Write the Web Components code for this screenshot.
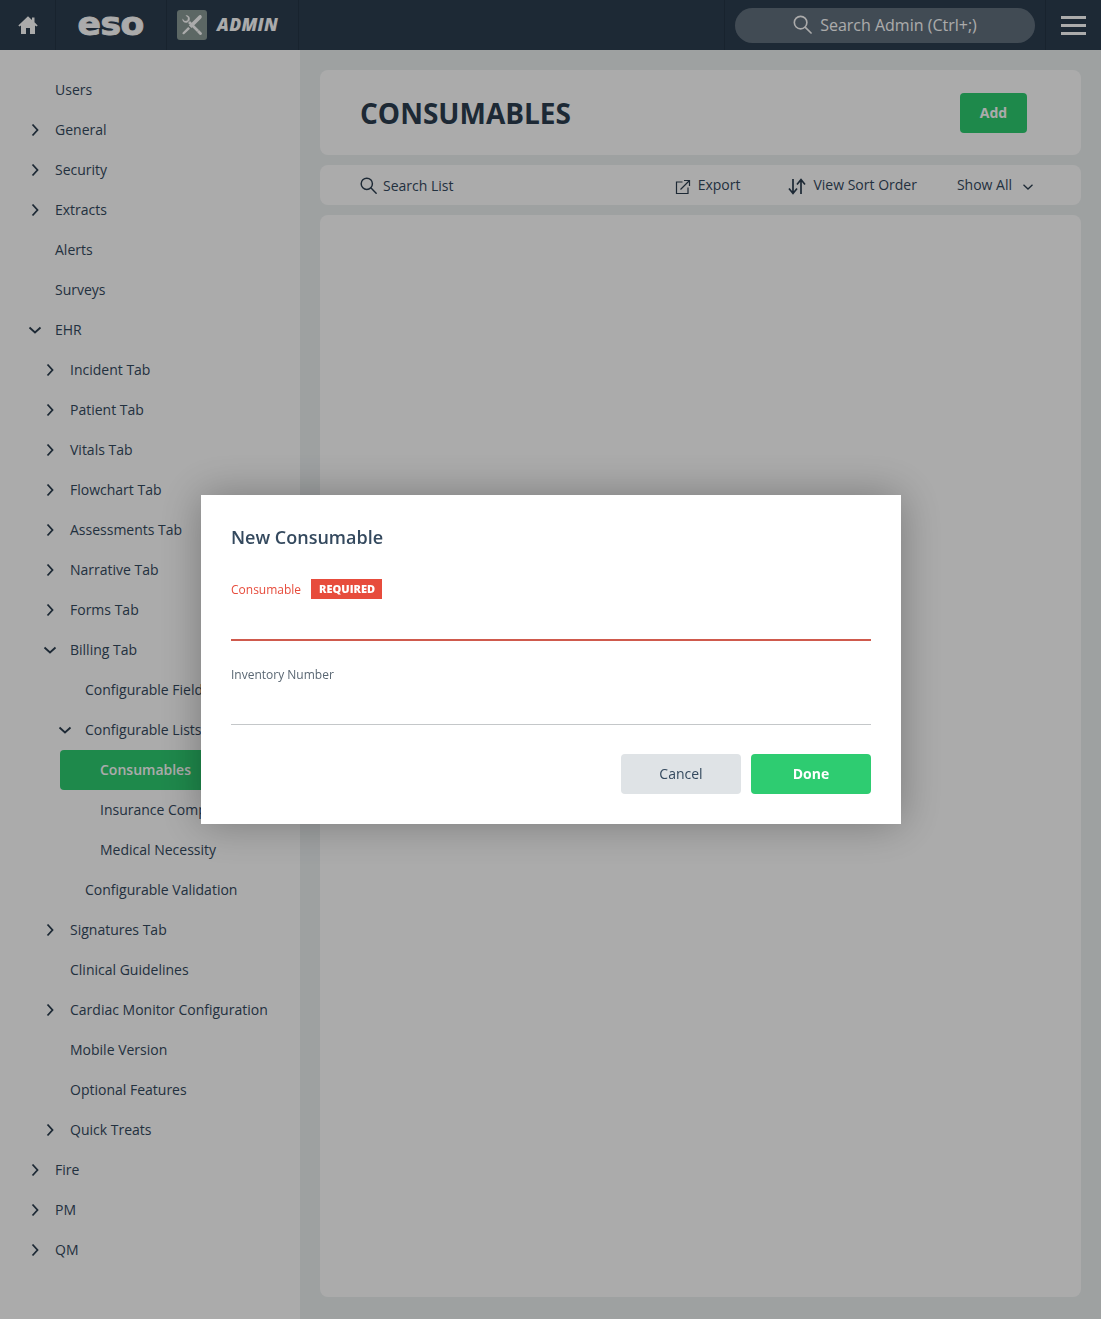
<!DOCTYPE html>
<html>
<head>
<meta charset="utf-8">
<title>Consumables</title>
<style>
    html, body { margin: 0; padding: 0; }
    body { font-family: "Open Sans", "Liberation Sans", sans-serif; color: #2c3e50; background: #ecf0f1; }
    .layout { display: flex; align-items: stretch; min-height: 1269px; }
</style>
</head>
<body>
<app-header></app-header>
<div class="layout">
    <side-nav>
        <nav-item>Users</nav-item>
        <nav-item arrow="right">General</nav-item>
        <nav-item arrow="right">Security</nav-item>
        <nav-item arrow="right">Extracts</nav-item>
        <nav-item>Alerts</nav-item>
        <nav-item>Surveys</nav-item>
        <nav-item arrow="down">EHR</nav-item>
        <nav-item level="1" arrow="right">Incident Tab</nav-item>
        <nav-item level="1" arrow="right">Patient Tab</nav-item>
        <nav-item level="1" arrow="right">Vitals Tab</nav-item>
        <nav-item level="1" arrow="right">Flowchart Tab</nav-item>
        <nav-item level="1" arrow="right">Assessments Tab</nav-item>
        <nav-item level="1" arrow="right">Narrative Tab</nav-item>
        <nav-item level="1" arrow="right">Forms Tab</nav-item>
        <nav-item level="1" arrow="down">Billing Tab</nav-item>
        <nav-item level="2">Configurable Fields</nav-item>
        <nav-item level="2" arrow="down">Configurable Lists</nav-item>
        <nav-item level="3" active>Consumables</nav-item>
        <nav-item level="3">Insurance Companies</nav-item>
        <nav-item level="3">Medical Necessity</nav-item>
        <nav-item level="2">Configurable Validation</nav-item>
        <nav-item level="1" arrow="right">Signatures Tab</nav-item>
        <nav-item level="1">Clinical Guidelines</nav-item>
        <nav-item level="1" arrow="right">Cardiac Monitor Configuration</nav-item>
        <nav-item level="1">Mobile Version</nav-item>
        <nav-item level="1">Optional Features</nav-item>
        <nav-item level="1" arrow="right">Quick Treats</nav-item>
        <nav-item arrow="right">Fire</nav-item>
        <nav-item arrow="right">PM</nav-item>
        <nav-item arrow="right">QM</nav-item>
    </side-nav>
    <main-panel heading="CONSUMABLES"></main-panel>
</div>
<modal-dialog heading="New Consumable">
    <form-field label="Consumable" required></form-field>
    <form-field label="Inventory Number"></form-field>
    <ui-button slot="actions" kind="plain">Cancel</ui-button>
    <ui-button slot="actions" kind="primary">Done</ui-button>
</modal-dialog>

<script>
// shared icon for search, used in header and toolbar
const searchIcon = (size, color) => `
    <svg width="${size}" height="${size}" viewBox="0 0 20 20" fill="none" stroke="${color}" stroke-width="1.7" stroke-linecap="round">
        <circle cx="8" cy="8" r="6.6"/><line x1="13" y1="13" x2="19" y2="19"/>
    </svg>`;

class AppHeader extends HTMLElement {
    connectedCallback() {
        this.attachShadow({ mode: "open" }).innerHTML = `
        <style>
            :host { display: flex; height: 50px; background: #2c3e50; color: #fff; align-items: stretch; }
            .cell { display: flex; align-items: center; border-right: 1px solid #253545; box-sizing: border-box; flex: none; }
            .home { width: 56px; justify-content: center; }
            .logo { width: 111px; justify-content: center; }
            .logo span {
                font: 700 32px/1 "DejaVu Sans", sans-serif; letter-spacing: -0.5px;
                -webkit-text-stroke: 0.9px #fff;
                transform: scaleX(1.08); display: block; margin-top: -3px;
            }
            .admin { width: 132px; padding-left: 10px; gap: 10px; }
            .badge { width: 30px; height: 30px; border-radius: 3px; background: #8a9a95; display: flex; align-items: center; justify-content: center; }
            .admin b { font: italic 800 17.5px/1 "Open Sans", sans-serif; letter-spacing: 0.3px; }
            .fill { flex: 1; }
            .search { width: 322px; border-left: 1px solid #253545; padding-left: 10px; }
            .pill {
                width: 300px; height: 35px; border-radius: 18px; background: #62707e; color: #fff;
                display: flex; align-items: center; justify-content: center; gap: 8px;
                font-size: 16px;
            }
            .pill svg { margin-top: -2px; }
            .menu { width: 55px; border-right: 0; justify-content: center; }
            .menu div { width: 25px; height: 19px; margin-top: 1px; border-top: 3px solid #fff; border-bottom: 3px solid #fff; box-sizing: border-box; position: relative; }
            .menu div::after { content: ""; position: absolute; left: 0; right: 0; top: 5px; height: 3px; background: #fff; }
        </style>
        <div class="cell home">
            <svg width="20" height="20" viewBox="0 0 20 20" fill="#fff">
                <path d="M10 1.2 0.3 10.4 1.6 11.6 3 10.4V19H8V13H12V19H17V10.4L18.4 11.6 19.7 10.4 16.5 7.3V2.5H14V5Z"/>
            </svg>
        </div>
        <div class="cell logo"><span>eso</span></div>
        <div class="cell admin">
            <div class="badge">
                <svg width="24" height="24" viewBox="0 0 24 24" fill="#fff">
                    <path d="M9 9 18 18" stroke="#fff" stroke-width="2.6"/>
                    <path d="M17 19 19 17 21.4 19.4C22.2 20.2 22.1 21 21.5 21.6 20.9 22.2 20.1 22.2 19.4 21.4Z"/>
                    <path d="M2.4 5.6C2 8.4 4.6 10.6 7.4 9.6L9.6 7.4C10.6 4.6 8.4 2 5.6 2.4L8 4.8 7.4 7.4 4.8 8Z"/>
                    <path d="M21.2 2.4C22.2 3.4 21.8 4.8 20.8 5.8L11.5 15.1 8.9 12.5 18.2 3.2C19.2 2.2 20.4 1.6 21.2 2.4Z"/>
                    <path d="M10 15.8 4.6 20.8C3.9 21.5 3.2 21.4 2.8 21 2.3 20.5 2.3 19.9 3 19.2L8.2 14Z"/>
                </svg>
            </div>
            <b>ADMIN</b>
        </div>
        <div class="fill"></div>
        <div class="cell search">
            <div class="pill">${searchIcon(19, "#fff")}<span>Search Admin (Ctrl+;)</span></div>
        </div>
        <div class="cell menu"><div></div></div>`;
    }
}
customElements.define("app-header", AppHeader);

class SideNav extends HTMLElement {
    connectedCallback() {
        this.attachShadow({ mode: "open" }).innerHTML = `
        <style>
            :host { display: block; width: 300px; flex: none; background: #fff; padding: 20px 0; box-sizing: border-box; }
        </style>
        <slot></slot>`;
    }
}
customElements.define("side-nav", SideNav);

class NavItem extends HTMLElement {
    connectedCallback() {
        let level = parseInt(this.getAttribute("level") || 0);
        let arrow = this.getAttribute("arrow");
        let left = 55 + level * 15;
        let active = this.hasAttribute("active");
        let icon = "";
        if (arrow === "right") {
            icon = `<svg class="arrow" style="left:${left - 25}px;width:10px" viewBox="0 0 10 14"><path d="M2.5 1.5 7.5 7 2.5 12.5"/></svg>`;
        } else if (arrow === "down") {
            icon = `<svg class="arrow" style="left:${left - 27}px;width:14px" viewBox="0 0 14 14"><path d="M1.5 4.5 7 9.5 12.5 4.5"/></svg>`;
        }
        this.attachShadow({ mode: "open" }).innerHTML = `
        <style>
            :host { display: block; }
            .row {
                position: relative; display: flex; align-items: center;
                padding-left: ${active ? left - 60 : left}px;
                padding-bottom: 2px;
                margin: ${active ? "0 20px 0 60px" : "0"};
                height: 40px;
                font-size: 14px; color: #34495e; white-space: nowrap; box-sizing: border-box;
                border-radius: 4px;
                ${active ? "background: #2ecc71; color: #fff; font-weight: 600;" : ""}
            }
            .arrow { position: absolute; top: 13px; height: 14px; fill: none; stroke: #2c3e50; stroke-width: 1.8; }
        </style>
        <div class="row">${icon}<slot></slot></div>`;
    }
}
customElements.define("nav-item", NavItem);

class MainPanel extends HTMLElement {
    connectedCallback() {
        this.attachShadow({ mode: "open" }).innerHTML = `
        <style>
            :host { display: flex; flex-direction: column; flex: 1; gap: 10px; padding: 20px 20px 22px; box-sizing: border-box; min-width: 0; }
            .card { background: #fff; border-radius: 8px; }
            .head { height: 85px; display: flex; align-items: center; justify-content: space-between; padding: 0 54px 0 40px; box-sizing: border-box; }
            h1 { margin: 0; font-size: 28px; font-weight: 700; color: #2c3e50; }
            .tools { height: 40px; display: flex; align-items: center; font-size: 14px; color: #34495e; position: relative; }
            .tool { display: flex; align-items: center; }
            .tool span { padding-bottom: 2px; }
            .find { margin-left: 40px; gap: 6px; flex: 1; padding-top: 1px; }
            .find span { padding-bottom: 0; }
            .export { gap: 7px; margin-right: 48px; }
            .sort { gap: 7px; margin-right: 40px; }
            .show { gap: 11px; margin-right: 48px; }
            .body { flex: 1; }
        </style>
        <div class="card head">
            <h1>${this.getAttribute("heading")}</h1>
            <ui-button kind="primary" style="--w:67px">Add</ui-button>
        </div>
        <div class="card tools">
            <div class="tool find">${searchIcon(17, "#2c3e50")}<span>Search List</span></div>
            <div class="tool export">
                <svg width="16" height="16" viewBox="0 0 16 16" fill="none" stroke="#2c3e50" stroke-width="1.2" style="margin-top:3px">
                    <path d="M7.5 3H1.5V14.5H13V8.5"/><path d="M5.5 10.5 14.5 1.5M9 1.5H14.5V7"/>
                </svg>
                <span>Export</span>
            </div>
            <div class="tool sort">
                <svg width="18" height="17" viewBox="0 0 18 17" fill="none" stroke="#2c3e50" stroke-width="1.7" style="margin-top:2px">
                    <path d="M5 1V15M1 10.5 5 15.5 9 10.5"/><path d="M13 16V2M9 6.5 13 1.5 17 6.5"/>
                </svg>
                <span>View Sort Order</span>
            </div>
            <div class="tool show">
                <span>Show All</span>
                <svg width="10" height="6" viewBox="0 0 10 6" fill="none" stroke="#2c3e50" stroke-width="1.3" style="margin-top:4px"><path d="M.5 .8 5 5 9.5 .8"/></svg>
            </div>
        </div>
        <div class="card body"></div>`;
    }
}
customElements.define("main-panel", MainPanel);

class UiButton extends HTMLElement {
    connectedCallback() {
        let primary = this.getAttribute("kind") === "primary";
        this.attachShadow({ mode: "open" }).innerHTML = `
        <style>
            :host { display: inline-flex; }
            button {
                width: var(--w, 120px); height: 40px; border: 0; border-radius: 4px; padding: 0 0 var(--pb, 0);
                font-family: inherit; font-size: 14px;
                font-weight: ${primary ? 700 : 400};
                background: ${primary ? "#2ecc71" : "#dfe3e6"};
                color: ${primary ? "#fff" : "#34495e"};
            }
        </style>
        <button type="button"><slot></slot></button>`;
    }
}
customElements.define("ui-button", UiButton);

class FormField extends HTMLElement {
    connectedCallback() {
        let required = this.hasAttribute("required");
        this.attachShadow({ mode: "open" }).innerHTML = `
        <style>
            :host { display: block; }
            .label { display: flex; align-items: center; gap: 10px; height: 20px; font-size: 12px; color: ${required ? "#e74c3c" : "#5a6773"}; }
            .tag { background: #e74c3c; color: #fff; font-size: 11px; font-weight: 800; padding: 0 7px 0 8px; height: 20px; line-height: 20px; }
            input {
                display: block; width: 100%; box-sizing: border-box; border: 0; outline: 0; background: transparent;
                height: ${required ? 42 : 41}px;
                border-bottom: ${required ? "2px solid #cf5a4d" : "1px solid #c4c7c9"};
            }
        </style>
        <div class="label"><span>${this.getAttribute("label")}</span>${required ? '<span class="tag">REQUIRED</span>' : ""}</div>
        <input type="text">`;
    }
}
customElements.define("form-field", FormField);

class ModalDialog extends HTMLElement {
    connectedCallback() {
        this.attachShadow({ mode: "open" }).innerHTML = `
        <style>
            :host {
                position: fixed; inset: 0; display: flex; align-items: center; justify-content: center;
                background: rgba(0, 0, 0, 0.33);
            }
            .box {
                width: 700px; height: 329px; margin-left: 1px; box-sizing: border-box; background: #fff; padding: 30px;
                box-shadow: 0 0 40px rgba(0, 0, 0, 0.3);
                display: flex; flex-direction: column;
            }
            h2 { margin: -1px 0 29px; font-size: 18px; line-height: 26px; font-weight: 600; color: #34495e; }
            .fields { display: flex; flex-direction: column; gap: 23px; }
            .actions { display: flex; justify-content: flex-end; gap: 10px; margin-top: 29px; }
            ::slotted(ui-button) { --pb: 2px; }
        </style>
        <div class="box">
            <h2>${this.getAttribute("heading")}</h2>
            <div class="fields"><slot></slot></div>
            <div class="actions"><slot name="actions"></slot></div>
        </div>`;
    }
}
customElements.define("modal-dialog", ModalDialog);
</script>
</body>
</html>
